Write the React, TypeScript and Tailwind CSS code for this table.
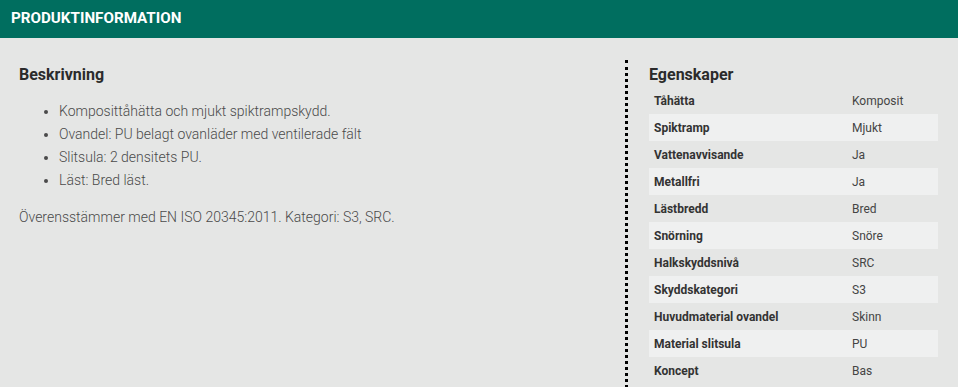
import React from "react";

const bullets = [
  "Komposittåhätta och mjukt spiktrampskydd.",
  "Ovandel: PU belagt ovanläder med ventilerade fält",
  "Slitsula: 2 densitets PU.",
  "Läst: Bred läst.",
];

const props: [string, string][] = [
  ["Tåhätta", "Komposit"],
  ["Spiktramp", "Mjukt"],
  ["Vattenavvisande", "Ja"],
  ["Metallfri", "Ja"],
  ["Lästbredd", "Bred"],
  ["Snörning", "Snöre"],
  ["Halkskyddsnivå", "SRC"],
  ["Skyddskategori", "S3"],
  ["Huvudmaterial ovandel", "Skinn"],
  ["Material slitsula", "PU"],
  ["Koncept", "Bas"],
];

export default function App() {
  return (
    <div
      className="w-[958px] h-[387px] overflow-hidden bg-[#e5e6e5] text-[#444]"
      style={{ fontFamily: "Roboto, 'Liberation Sans', sans-serif" }}
    >
      <div className="h-[38px] bg-[#006e5f] flex items-center px-[11px]">
        <h2 className="text-white font-bold text-[15.2px] leading-none">
          PRODUKTINFORMATION
        </h2>
      </div>
      <div className="flex pt-[22px] pl-[19px] pr-[19px]">
        <div className="flex-1">
          <h3 className="mt-[5px] text-[16px] font-bold text-[#2b2b2b] leading-[20px]">
            Beskrivning
          </h3>
          <ul className="mt-[15px] pl-[40px] list-disc text-[14px] font-light leading-[23px] text-[#4a4a4a]">
            {bullets.map((b) => (
              <li key={b}>{b}</li>
            ))}
          </ul>
          <p className="mt-[14px] text-[14px] font-light leading-[23px] text-[#4a4a4a]">
            Överensstämmer med EN ISO 20345:2011. Kategori: S3, SRC.
          </p>
        </div>
        <div className="w-[314px] border-l-[3px] border-dotted border-black pl-[21px] h-[400px]">
          <h3 className="mt-[5px] text-[16px] font-bold text-[#2b2b2b] leading-[20px]">
            Egenskaper
          </h3>
          <table className="mt-[2px] w-[289px] text-[12px] border-collapse">
            <tbody>
              {props.map(([k, v], i) => (
                <tr
                  key={k}
                  className={i % 2 === 1 ? "h-[27px] bg-[#eff0f0]" : "h-[27px]"}
                >
                  <td className="w-[203px] pl-[5px] font-bold text-[#333] align-middle">
                    {k}
                  </td>
                  <td className="text-[#444] align-middle">{v}</td>
                </tr>
              ))}
            </tbody>
          </table>
        </div>
      </div>
    </div>
  );
}
